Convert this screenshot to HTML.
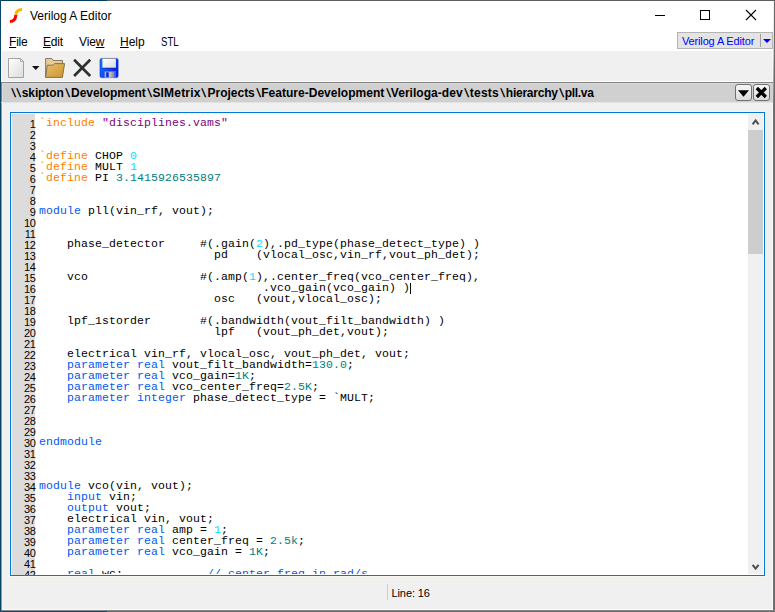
<!DOCTYPE html>
<html><head><meta charset="utf-8"><title>Verilog A Editor</title>
<style>
html,body{margin:0;padding:0;}
body{width:775px;height:612px;overflow:hidden;background:#6e6e6e;font-family:"Liberation Sans",sans-serif;font-size:12px;color:#000;position:relative;}
#win{position:absolute;left:0;top:0;width:773px;height:610px;background:#f0f0f0;overflow:hidden;}
#win>div,#win>svg,.fr{position:absolute;}
#title{left:0;top:0;width:773px;height:51px;background:#fff;}
#title .t{position:absolute;left:30px;top:9px;font-size:12px;line-height:15px;white-space:nowrap;}
#menu{left:0;top:30px;width:300px;height:21px;}
#menu span{position:absolute;top:5px;line-height:14px;font-size:12px;white-space:nowrap;transform-origin:0 0;}
#menu u{text-decoration:underline;text-underline-offset:1px;}
#vbtn{left:677px;top:32px;width:94px;height:15px;background:#e4e4e4;border:1px solid #b4b4b4;}
#vbtn .t{position:absolute;left:4px;top:1px;letter-spacing:-0.15px;font-size:11px;line-height:14px;color:#0000ff;white-space:nowrap;}
#vbtn .sep{position:absolute;left:82px;top:1px;width:1px;height:13px;background:#a0a0a0;}
#vbtn .arr{position:absolute;left:85px;top:6px;width:0;height:0;border-left:4px solid transparent;border-right:4px solid transparent;border-top:4px solid #0000ff;}
#tool{left:0;top:51px;width:773px;height:30px;background:#f0f0f0;border-bottom:1px solid #fff;}
#path{left:1px;top:82px;width:772px;height:20px;background:#d0d0d0;border-top:1px solid #828282;border-left:1px solid #828282;box-sizing:border-box;box-shadow:inset 1px 1px #dadada, 0 1px #e3e3e3;}
#path .t{position:absolute;left:0;top:3px;font-size:12px;font-weight:bold;line-height:14px;white-space:nowrap;}
#path .t span{position:absolute;top:0;}
#path .t span.b{transform:skewX(13deg);}
.pb{position:absolute;top:1px;width:15px;height:15px;border:1px solid #707070;border-radius:3px;background:linear-gradient(#f6f6f6,#dcdcdc);}
#ed{left:10px;top:112px;width:753px;height:462px;border:1px solid #0078d7;background:#fff;overflow:hidden;box-shadow:0 0 0 1px #f8f4ee;}
#gut{position:absolute;left:1px;top:1px;width:23px;height:461px;background:#dcdcdc;}
#nums{position:absolute;left:0px;top:6px;width:24.400px;text-align:right;font-size:11px;letter-spacing:-0.400px;line-height:11px;}
#nums div{height:11px;}
#code{position:absolute;left:28px;top:4px;font-family:"Liberation Mono",monospace;font-size:11.5px;letter-spacing:0.099px;line-height:11px;white-space:pre;}
#code div{height:11px;}
#code i{font-style:normal;}
.p{color:#ff8000;}.s{color:#800080;}.k{color:#0058f0;}.n{color:#00e0ff;}.f{color:#008080;}.c{color:#0058f0;}
#caret{position:absolute;left:399px;top:170px;width:1px;height:11px;background:#000;}
#sb{position:absolute;left:737px;top:1px;width:15px;height:460px;background:#f0f0f0;}
#sb .th{position:absolute;left:0;top:16px;width:15px;height:124px;background:#cdcdcd;}
#status .sep{position:absolute;left:0;top:0;width:1px;height:16px;background:#d0d0d0;}
#status .t{position:absolute;left:4.500px;top:2px;letter-spacing:-0.100px;font-size:11px;line-height:14px;white-space:nowrap;}
</style></head><body>
<div id="win">
<div id="title">
<svg style="position:absolute;left:8px;top:6px" width="18" height="18" viewBox="8 6 18 18"><path d="M10 21.500C13.500 21.500 15.500 19 15.900 14.800" fill="none" stroke="#ff0000" stroke-width="3"/><path d="M15.900 14.900C16.300 11 18.500 9.500 22 9.500" fill="none" stroke="#ffb400" stroke-width="3"/></svg>
<div class="t">Verilog A Editor</div>
<svg style="position:absolute;left:640px;top:0" width="130" height="30" viewBox="640 0 130 30"><g fill="none" stroke="#000" stroke-width="1"><path d="M655 15.500H665"/><rect x="700.500" y="10.500" width="9" height="9"/><path d="M746 10L756 20M756 10L746 20" stroke-width="1.100"/></g></svg>
</div>
<div id="menu"><span style="left:9px;letter-spacing:-0.2px"><u>F</u>ile</span><span style="left:43px;letter-spacing:-0.2px"><u>E</u>dit</span><span style="left:79px;letter-spacing:-0.1px">Vie<u>w</u></span><span style="left:120px"><u>H</u>elp</span><span style="left:161px;transform:scaleX(0.8)">STL</span></div>
<div id="vbtn"><div class="t">Verilog A Editor</div><div class="sep"></div><div class="arr"></div></div>
<div id="tool">
<svg style="position:absolute;left:0;top:0" width="130" height="30" viewBox="0 51 130 30">
<defs><linearGradient id="gp" x1="0" y1="0" x2="1" y2="1"><stop offset="0" stop-color="#ffffff"/><stop offset="1" stop-color="#dcdcdc"/></linearGradient>
<linearGradient id="gf" x1="0" y1="0" x2="1" y2="1"><stop offset="0" stop-color="#e4c078"/><stop offset="1" stop-color="#cf9422"/></linearGradient>
<linearGradient id="gl" x1="0" y1="0" x2="1" y2="1"><stop offset="0" stop-color="#ffffff"/><stop offset="1" stop-color="#dcdcdc"/></linearGradient>
<linearGradient id="gs" x1="0" y1="0" x2="1" y2="0.600"><stop offset="0" stop-color="#1478ff"/><stop offset="0.500" stop-color="#0c50fc"/><stop offset="1" stop-color="#0420ec"/></linearGradient><linearGradient id="gm" x1="0" y1="0" x2="1" y2="0"><stop offset="0" stop-color="#d0d0d0"/><stop offset="1" stop-color="#8c8c8c"/></linearGradient></defs>
<path d="M8.500 58.500H20.500L23.500 61.500V77.500H8.500Z" fill="url(#gp)" stroke="#989898" stroke-width="0.900"/>
<path d="M20.500 58.500V61.500H23.500" fill="none" stroke="#a0a0a0" stroke-width="0.800"/>
<path d="M32 66H39.500L35.750 70Z" fill="#101010"/>
<path d="M45.600 77.400V58.500H51.800L53.200 60.500H62.500V70H48Z" fill="#e8cc98"/><path d="M45.600 77.400V58.500H51.800L53.200 60.500H62.500V64" fill="none" stroke="#7c705c" stroke-width="0.900"/>
<path d="M45.600 77.400L47.200 65.200H52.800L54.600 63.600H64.600L62.400 77.400Z" fill="url(#gf)" stroke="#7a6a44" stroke-width="0.900"/>
<path d="M74.100 59.800L90.200 76M90.200 59.800L74.100 76" stroke="#303030" stroke-width="2.700" fill="none"/>
<rect x="100" y="58.400" width="18.100" height="19.200" rx="1.700" fill="url(#gs)" stroke="#0a30c0" stroke-width="0.600"/>
<rect x="102.400" y="58.500" width="13.500" height="9.500" fill="url(#gl)"/>
<path d="M102.400 58.500H115.900" stroke="#909090" stroke-width="0.800"/><path d="M102.400 68.200H115.900" stroke="#0820b0" stroke-width="0.800"/>
<rect x="104.600" y="71.500" width="11.400" height="6.100" fill="#b4b4b4"/>
<rect x="106.200" y="72.300" width="2.500" height="4.800" fill="#0828e8"/>
<rect x="109.200" y="72" width="4.300" height="5.600" fill="url(#gm)"/>
<rect x="113.800" y="71.500" width="2.200" height="6.100" fill="#4c5cff"/>
</svg>
</div>
<div id="path"><div class="t"><span class="b" style="left:10.2px">\</span><span class="b" style="left:15.3px">\</span><span style="left:19.8px;letter-spacing:-0.12px">skipton</span><span class="b" style="left:64.1px">\</span><span style="left:69.1px;letter-spacing:-0.07px">Development</span><span class="b" style="left:145.8px">\</span><span style="left:150.4px;letter-spacing:0.19px">SIMetrix</span><span class="b" style="left:200.3px">\</span><span style="left:205.5px;letter-spacing:-0.01px">Projects</span><span class="b" style="left:254.7px">\</span><span style="left:259.2px;letter-spacing:0.02px">Feature-Development</span><span class="b" style="left:384.5px">\</span><span style="left:388.8px;letter-spacing:0.04px">Veriloga-dev</span><span class="b" style="left:463.3px">\</span><span style="left:467.8px;letter-spacing:0.22px">tests</span><span class="b" style="left:498.8px">\</span><span style="left:503.8px;letter-spacing:-0.24px">hierarchy</span><span class="b" style="left:557.5px">\</span><span style="left:562.8px;letter-spacing:-0.33px">pll.va</span></div>
<div class="pb" style="left:733px"><svg width="15" height="15" viewBox="0 0 15 15"><path d="M2 5.200H13L7.500 11.800Z" fill="#000"/></svg></div>
<div class="pb" style="left:751px"><svg width="15" height="15" viewBox="0 0 15 15"><path d="M2.800 3L11.800 12M11.800 3L2.800 12" stroke="#000" stroke-width="3.300" fill="none"/></svg></div>
</div>
<div id="ed">
<div id="gut"></div>
<div id="nums"><div>1</div><div>2</div><div>3</div><div>4</div><div>5</div><div>6</div><div>7</div><div>8</div><div>9</div><div>10</div><div>11</div><div>12</div><div>13</div><div>14</div><div>15</div><div>16</div><div>17</div><div>18</div><div>19</div><div>20</div><div>21</div><div>22</div><div>23</div><div>24</div><div>25</div><div>26</div><div>27</div><div>28</div><div>29</div><div>30</div><div>31</div><div>32</div><div>33</div><div>34</div><div>35</div><div>36</div><div>37</div><div>38</div><div>39</div><div>40</div><div>41</div><div>42</div></div>
<div id="code"><div><i class="p">`include</i> <i class="s">"disciplines.vams"</i></div><div></div><div></div><div><i class="p">`define</i> CHOP <i class="n">0</i></div><div><i class="p">`define</i> MULT <i class="n">1</i></div><div><i class="p">`define</i> PI <i class="f">3.1415926535897</i></div><div></div><div></div><div><i class="k">module</i> pll(vin_rf, vout);</div><div></div><div></div><div>    phase_detector     #(.gain(<i class="n">2</i>),.pd_type(phase_detect_type) )</div><div>                         pd    (vlocal_osc,vin_rf,vout_ph_det);</div><div></div><div>    vco                #(.amp(<i class="n">1</i>),.center_freq(vco_center_freq),</div><div>                                .vco_gain(vco_gain) )</div><div>                         osc   (vout,vlocal_osc);</div><div></div><div>    lpf_1storder       #(.bandwidth(vout_filt_bandwidth) )</div><div>                         lpf   (vout_ph_det,vout);</div><div></div><div>    electrical vin_rf, vlocal_osc, vout_ph_det, vout;</div><div>    <i class="k">parameter</i> <i class="k">real</i> vout_filt_bandwidth=<i class="f">130.0</i>;</div><div>    <i class="k">parameter</i> <i class="k">real</i> vco_gain=<i class="f">1K</i>;</div><div>    <i class="k">parameter</i> <i class="k">real</i> vco_center_freq=<i class="f">2.5K</i>;</div><div>    <i class="k">parameter</i> <i class="k">integer</i> phase_detect_type = `MULT;</div><div></div><div></div><div></div><div><i class="k">endmodule</i></div><div></div><div></div><div></div><div><i class="k">module</i> vco(vin, vout);</div><div>    <i class="k">input</i> vin;</div><div>    <i class="k">output</i> vout;</div><div>    electrical vin, vout;</div><div>    <i class="k">parameter</i> <i class="k">real</i> amp = <i class="n">1</i>;</div><div>    <i class="k">parameter</i> <i class="k">real</i> center_freq = <i class="f">2.5k</i>;</div><div>    <i class="k">parameter</i> <i class="k">real</i> vco_gain = <i class="f">1K</i>;</div><div></div><div>    <i class="k">real</i> wc;            <i class="c">// center freq in rad/s</i></div></div>
<div id="caret"></div>
<div style="position:absolute;left:24px;top:461px;width:713px;height:1px;background:#fff"></div>
<div id="sb"><div class="th"></div>
<svg style="position:absolute;left:0;top:0" width="15" height="460" viewBox="748 114 15 460"><path d="M752.600 124.400L755.600 120.500L758.600 124.400M752.600 564.800L755.600 568.700L758.600 564.800" fill="none" stroke="#505050" stroke-width="2"/></svg></div>
</div>
<div id="status" style="left:387px;top:584px;width:100px;height:20px"><div class="sep"></div><div class="t">Line: 16</div></div>
<div style="left:2px;top:609px;width:771px;height:1px;background:#fafafa"></div>
<div style="left:772px;top:103px;width:1px;height:507px;background:#f8f8f8"></div>
<div style="left:772px;top:51px;width:1px;height:31px;background:#f8f8f8"></div>
<div style="left:2px;top:103px;width:1px;height:507px;background:#f8f8f8"></div>
<div style="left:1px;top:51px;width:1px;height:31px;background:#fff"></div>
<div style="left:1px;top:103px;width:1px;height:507px;background:#8d9599"></div>
</div>
<div class="fr" style="left:773px;top:0;width:1px;height:612px;background:linear-gradient(#f4f4f4 0px,#e0e0e0 40px,#707070 110px,#707070 612px)"></div>
<div class="fr" style="left:774px;top:0;width:1px;height:612px;background:#6a6a6a"></div>
<div class="fr" style="left:1px;top:610px;width:774px;height:1px;background:#878484"></div>
<div class="fr" style="left:0;top:611px;width:775px;height:1px;background:#6e6e6e"></div>
<div class="fr" style="left:0;top:611px;width:107px;height:1px;background:#0e506c"></div>
<div class="fr" style="left:0;top:0;width:775px;height:1px;background:#5e5e5e"></div>
<div class="fr" style="left:0;top:0;width:107px;height:1px;background:#003d5c"></div>
<div class="fr" style="left:0;top:0;width:1px;height:612px;background:#0a4766"></div>
</body></html>
